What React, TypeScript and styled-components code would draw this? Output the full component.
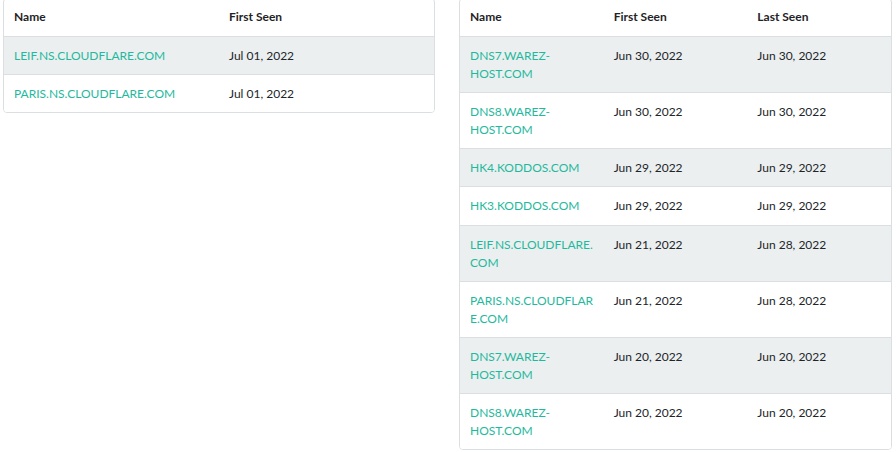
import styled, { createGlobalStyle } from "styled-components";

const Global = createGlobalStyle`
    body {
        margin: 0;
        background: #ffffff;
        font-family: Lato, "Open Sans", Arial, sans-serif;
        font-size: 12px;
        color: #212529;
    }
`;

const Page = styled.div`
    display: grid;
    grid-template-columns: 432px 433px;
    align-items: start;
    gap: 24px;
    padding: 0 0 0 3px;
    margin-top: -2px;
`;

const Card = styled.div`
    border: 1px solid #dcdfe1;
    border-radius: 4px;
    overflow: hidden;
    background: #ffffff;
`;

const Table = styled.table`
    width: 100%;
    border-collapse: collapse;
    table-layout: fixed;
`;

const Th = styled.th`
    text-align: left;
    font-weight: 700;
    padding: 9px 10px 10px;
    line-height: 18px;
    color: #1f2326;
    border-bottom: 1px solid #dcdfe1;
`;

const Tr = styled.tr<{ $striped: boolean }>`
    background: ${(p) => (p.$striped ? "#eceff0" : "#ffffff")};
`;

const Td = styled.td`
    vertical-align: top;
    padding: 10px 10px 9px;
    line-height: 18.1px;
    color: #212529;
    border-top: 1px solid #dcdfe1;
`;

const Link = styled.a`
    color: #1fb99d;
    text-decoration: none;
    overflow-wrap: anywhere;
`;

type Row = { name: string; first: string; last?: string };

const left: Row[] = [
    { name: "LEIF.NS.CLOUDFLARE.COM", first: "Jul 01, 2022" },
    { name: "PARIS.NS.CLOUDFLARE.COM", first: "Jul 01, 2022" },
];

const right: Row[] = [
    { name: "DNS7.WAREZ-HOST.COM", first: "Jun 30, 2022", last: "Jun 30, 2022" },
    { name: "DNS8.WAREZ-HOST.COM", first: "Jun 30, 2022", last: "Jun 30, 2022" },
    { name: "HK4.KODDOS.COM", first: "Jun 29, 2022", last: "Jun 29, 2022" },
    { name: "HK3.KODDOS.COM", first: "Jun 29, 2022", last: "Jun 29, 2022" },
    { name: "LEIF.NS.CLOUDFLARE.COM", first: "Jun 21, 2022", last: "Jun 28, 2022" },
    { name: "PARIS.NS.CLOUDFLARE.COM", first: "Jun 21, 2022", last: "Jun 28, 2022" },
    { name: "DNS7.WAREZ-HOST.COM", first: "Jun 20, 2022", last: "Jun 20, 2022" },
    { name: "DNS8.WAREZ-HOST.COM", first: "Jun 20, 2022", last: "Jun 20, 2022" },
];

function NsTable(props: { rows: Row[]; withLast: boolean }) {
    return (
        <Card>
            <Table>
                <thead>
                    <tr>
                        <Th>Name</Th>
                        <Th>First Seen</Th>
                        {props.withLast && <Th>Last Seen</Th>}
                    </tr>
                </thead>
                <tbody>
                    {props.rows.map((r, i) => (
                        <Tr key={i} $striped={i % 2 === 0}>
                            <Td><Link href="#">{r.name}</Link></Td>
                            <Td>{r.first}</Td>
                            {props.withLast && <Td>{r.last}</Td>}
                        </Tr>
                    ))}
                </tbody>
            </Table>
        </Card>
    );
}

export default function App() {
    return (
        <>
            <Global />
            <Page>
                <NsTable rows={left} withLast={false} />
                <NsTable rows={right} withLast={true} />
            </Page>
        </>
    );
}
